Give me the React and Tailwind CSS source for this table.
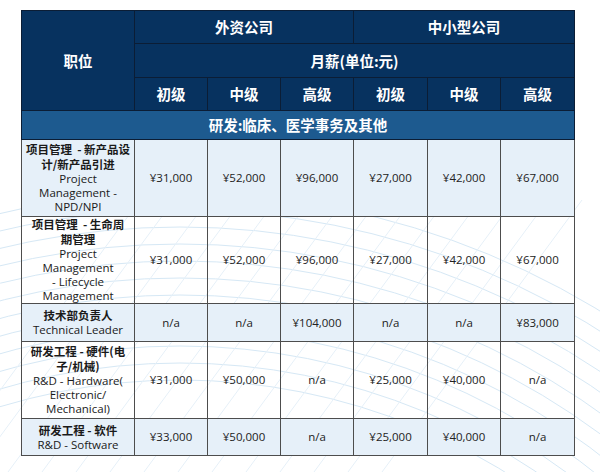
import React from 'react';

const LATIN = { fontFamily: '"Open Sans", "Noto Sans CJK SC", sans-serif' };
const CJK = { fontFamily: '"Noto Sans CJK SC", "Noto Sans", sans-serif' };

const rows = [
  {
    zh: ['项目管理  - 新产品设', '计/新产品引进'],
    en: ['Project', 'Management -', 'NPD/NPI'],
    h: 'h-[77px]',
    tint: true,
    vals: ['¥31,000', '¥52,000', '¥96,000', '¥27,000', '¥42,000', '¥67,000'],
  },
  {
    zh: ['项目管理  - 生命周', '期管理'],
    en: ['Project', 'Management', '- Lifecycle', 'Management'],
    h: 'h-[87px]',
    tint: false,
    vals: ['¥31,000', '¥52,000', '¥96,000', '¥27,000', '¥42,000', '¥67,000'],
  },
  {
    zh: ['技术部负责人'],
    en: ['Technical Leader'],
    h: 'h-[38px]',
    tint: true,
    vals: ['n/a', 'n/a', '¥104,000', 'n/a', 'n/a', '¥83,000'],
  },
  {
    zh: ['研发工程 - 硬件(电', '子/机械)'],
    en: ['R&D - Hardware(', 'Electronic/', 'Mechanical)'],
    h: 'h-[77px]',
    tint: false,
    vals: ['¥31,000', '¥50,000', 'n/a', '¥25,000', '¥40,000', 'n/a'],
  },
  {
    zh: ['研发工程 - 软件'],
    en: ['R&D - Software'],
    h: 'h-[37px]',
    tint: true,
    vals: ['¥33,000', '¥50,000', 'n/a', '¥25,000', '¥40,000', 'n/a'],
  },
];

function Backdrop() {
  const arcs = [];
  for (let i = 0; i < 12; i++) arcs.push(620 + i * 17);
  const lines = [];
  for (let i = 0; i < 14; i++) lines.push(i * 34);
  return (
    <svg className="absolute inset-0" width="600" height="472" viewBox="0 0 600 472">
      {arcs.map((r) => (
        <circle key={r} cx="180" cy="1000" r={r} fill="none" stroke="#d6e8f5" strokeWidth="1" />
      ))}
      {lines.map((o) => (
        <line key={o} x1={-60 + o} y1="472" x2={140 + o} y2="200" stroke="#e6f0f8" strokeWidth="1" />
      ))}
    </svg>
  );
}

export default function App() {
  const head = 'border border-[#0b1d35] bg-[#07325f] text-white font-bold text-center text-[14.5px]';
  const cell = 'border border-[#4d4d4d] text-center align-middle';
  return (
    <div className="relative w-[600px] h-[472px] overflow-hidden bg-white">
      <Backdrop />
      <div className="relative pl-[21px] pt-[10px]">
        <table className="table-fixed border-collapse w-[553px] border border-[#555]" style={CJK}>
          <colgroup>
            <col className="w-[113px]" />
            <col className="w-[73px]" />
            <col className="w-[73px]" />
            <col className="w-[73px]" />
            <col className="w-[74px]" />
            <col className="w-[73px]" />
            <col className="w-[74px]" />
          </colgroup>
          <thead>
            <tr className="h-[33px]">
              <th rowSpan={3} className={head}>职位</th>
              <th colSpan={3} className={head}>外资公司</th>
              <th colSpan={3} className={head}>中小型公司</th>
            </tr>
            <tr className="h-[34px]">
              <th colSpan={6} className={head}>月薪(单位:元)</th>
            </tr>
            <tr className="h-[33px]">
              {['初级', '中级', '高级', '初级', '中级', '高级'].map((t, i) => (
                <th key={i} className={head}>{t}</th>
              ))}
            </tr>
          </thead>
          <tbody>
            <tr className="h-[29px]">
              <td colSpan={7} className="border border-[#0b1d35] bg-[#1d5a8f] text-white font-bold text-center text-[14.5px]">
                研发:临床、医学事务及其他
              </td>
            </tr>
            {rows.map((r, ri) => (
              <tr key={ri} className={`${r.h} ${r.tint ? 'bg-[#e6f0f9]' : ''}`}>
                <td className={`${cell} p-0 px-[2px] text-[#1a1a1a]`}>
                  <div className="font-bold text-[11.5px] leading-[15px] whitespace-pre" style={CJK}>
                    {r.zh.map((l) => <div key={l}>{l}</div>)}
                  </div>
                  <div className="text-[11.5px] leading-[14px] whitespace-nowrap" style={LATIN}>
                    {r.en.map((l) => <div key={l}>{l}</div>)}
                  </div>
                </td>
                {r.vals.map((v, vi) => (
                  <td key={vi} className={`${cell} text-[11.5px] text-[#222]`} style={LATIN}>{v}</td>
                ))}
              </tr>
            ))}
          </tbody>
        </table>
      </div>
    </div>
  );
}
